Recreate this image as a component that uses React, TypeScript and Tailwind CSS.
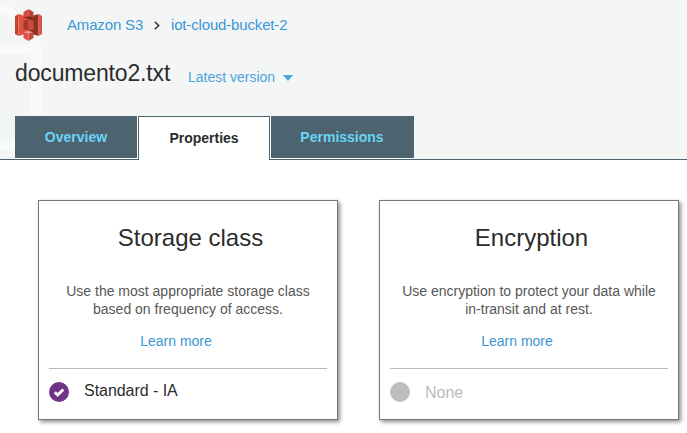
import type { ReactNode } from "react";

function S3Logo() {
  return (
    <svg width="27" height="32" viewBox="0 0 27 32" className="block shrink-0">
      <path d="M0 7 3.500 5v22L0 25z" fill="#c2432f" />
      <path d="M3.500 5 13.500 8v16l-10 3z" fill="#e05243" />
      <path d="M13.500 8 23.500 5v22l-10-3z" fill="#8c3123" />
      <path d="M23.500 5 27 7v18l-3.500 2z" fill="#e05243" />
      <path d="M8.500 11.500 13.500 10.700v10.600l-5-.8z" fill="#a5392a" />
      <path d="M18.500 11.500 13.500 10.700v10.600l5-.8z" fill="#cc4a3b" />
      <path d="M8.500 3 13.500 0v9.500L8.500 8.500z" fill="#d54c3e" />
      <path d="M18.500 3 13.500 0v9.500L18.500 8.500z" fill="#b93f31" />
      <path d="M8.500 8.700l5-1.200 5 1.200-5 1.300z" fill="#7a2a1f" />
      <path d="M8.500 23.300l5-1.300 5 1.300-5 1.200z" fill="#efa196" />
      <path d="M8.500 23.500l5 1V32L8.500 29z" fill="#e05243" />
      <path d="M18.500 23.500l-5 1V32l5-3z" fill="#c9463a" />
    </svg>
  );
}

function Watermark() {
  return (
    <svg width="60" height="159" className="absolute left-0 top-0" fill="none" stroke="#f9fbfa">
      <path d="M0 7C15 12 19 26 28 32c6 4 8 6 8 17v66M0 49h31M0 145h36" strokeWidth="10" />
    </svg>
  );
}

type CardProps = { title: string; lines: [string, string]; children: ReactNode };

function Card({ title, lines, children }: CardProps) {
  return (
    <section className="h-[220px] w-[300px] border border-[#777] bg-white px-[10px] shadow-[2px_2px_4px_rgba(0,0,0,0.45)]">
      <h2 className="mt-[22px] pl-[5px] text-center text-[24px] leading-[30px] text-[#2c2c2c]">{title}</h2>
      <p className="mt-[29px] whitespace-nowrap text-center text-[14px] leading-[18px] text-[#575757]">
        {lines[0]}
        <br />
        {lines[1]}
      </p>
      <div className="mt-[14px] pr-[4px] text-center text-[14px] leading-[18px]">
        <a className="mr-[20px] text-[#3b96d4]">Learn more</a>
      </div>
      <div className="mt-[18px] flex h-[46px] items-center border-t border-[#bbb]">{children}</div>
    </section>
  );
}

export default function App() {
  return (
    <main className="h-[433px] w-[687px] overflow-hidden bg-white font-['Liberation_Sans',Arial,sans-serif]">
      <header className="relative h-[160px] bg-[#f4f6f5]">
        <Watermark />
        <div className="relative flex h-full flex-col">
          <nav className="flex h-[50px] items-center pl-[15px] text-[15px] tracking-[-0.16px] text-[#3b96d4]">
            <S3Logo />
            <a className="ml-[25px] w-[77px] whitespace-nowrap">Amazon S3</a>
            <svg width="6" height="9" viewBox="0 0 6 9" className="mr-[11px] ml-[10px]" fill="none" stroke="#333" strokeWidth="1.500">
              <path d="M.8.7 4.700 4.500.8 8.300" />
            </svg>
            <a className="whitespace-nowrap">iot-cloud-bucket-2</a>
          </nav>
          <div className="flex h-[66px] items-start pl-[15px]">
            <h1 className="mt-[8px] w-[173px] whitespace-nowrap text-[23px] leading-[30px] tracking-[-0.15px] text-[#2c2c2c]">documento2.txt</h1>
            <button className="mt-[18px] flex items-center text-[14px] leading-[18px] text-[#4aa5dc]">
              Latest version
              <svg width="10" height="6" className="relative top-px ml-2">
                <path d="M0 0h10L5 6z" fill="#4aa5dc" />
              </svg>
            </button>
          </div>
          <div className="flex h-[44px] text-[14px] font-bold text-[#68d5f5]">
            <div className="w-[15px] border-b border-[#4d6370]" />
            <div className="flex w-[123px] border-b border-[#4d6370]">
              <button className="h-[43px] w-full border-r border-b border-white bg-[#4d6370]">Overview</button>
            </div>
            <button className="w-[132px] border border-b-0 border-[#4d6370] bg-white pb-px text-[#2c2c2c]">Properties</button>
            <div className="flex w-[144px] border-b border-[#4d6370]">
              <button className="h-[43px] w-full border-b border-l border-white bg-[#4d6370] pr-px">Permissions</button>
            </div>
            <div className="grow border-b border-[#4d6370]" />
          </div>
        </div>
      </header>
      <div className="flex gap-[41px] pt-[40px] pl-[38px]">
        <Card title="Storage class" lines={["Use the most appropriate storage class", "based on frequency of access."]}>
          <svg width="20" height="20" viewBox="0 0 20 20" className="shrink-0">
            <circle cx="10" cy="10" r="10" fill="#6f3584" />
            <path d="m5.800 10.300 2.800 2.700 5.700-5.600" fill="none" stroke="white" strokeWidth="2.800" />
          </svg>
          <span className="mb-[2px] ml-[15px] text-[16px] tracking-[-0.04px] text-[#2c2c2c]">Standard - IA</span>
        </Card>
        <Card title="Encryption" lines={["Use encryption to protect your data while", "in-transit and at rest."]}>
          <span className="size-5 shrink-0 rounded-full bg-[#bcbebd]" />
          <span className="mt-[2px] ml-[15px] text-[16px] text-[#bbb]">None</span>
        </Card>
      </div>
    </main>
  );
}
